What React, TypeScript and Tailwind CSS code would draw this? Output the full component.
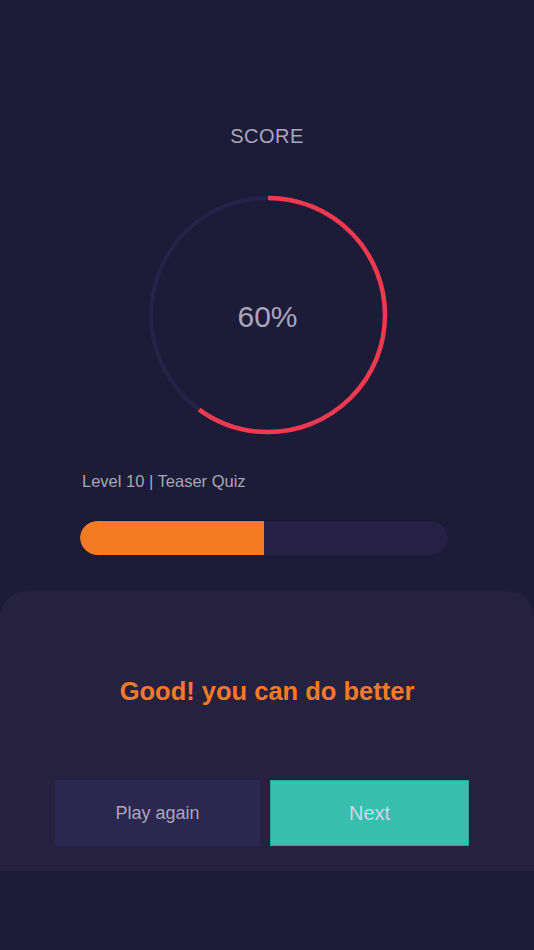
import React from 'react'

// score ring geometry
const R = 117
const C = 2 * Math.PI * R

function ScoreRing({ percent }: { percent: number }) {
  const dash = (percent / 100) * C
  return (
    <div className="relative w-[240px] h-[240px]">
      <svg width="240" height="240" viewBox="0 0 240 240" className="-rotate-90">
        <circle cx="120" cy="120" r={R} fill="none" stroke="#272249" strokeWidth="4" />
        <circle
          cx="120"
          cy="120"
          r={R}
          fill="none"
          stroke="#ef394e"
          strokeWidth="4.5"
          strokeDasharray={`${dash} ${C}`}
        />
      </svg>
      <div className="absolute inset-0 flex items-center justify-center">
        <p className="text-[30px] text-[#a9a6ba] pt-[3px]">{percent}%</p>
      </div>
    </div>
  )
}

export default function App() {
  return (
    <div className="w-[534px] h-[950px] bg-[#1d1c38] flex flex-col font-['Liberation_Sans',Arial,sans-serif]">
      <div className="flex flex-col items-center pt-[124px]">
        <p className="text-[20px] leading-6 text-[#a9a6ba] tracking-wide">SCORE</p>
        <div className="mt-[47px] ml-[1px]">
          <ScoreRing percent={60} />
        </div>
      </div>

      <div className="pl-[82px] pr-[86px] mt-[36px]">
        <p className="text-[16.5px] leading-5 text-[#a8a6b6]">Level 10 | Teaser Quiz</p>
        <div className="mt-[29px] ml-[-2px] h-[35px] rounded-full bg-[#262144] border-t border-[#17152c] overflow-hidden flex">
          <div className="w-1/2 h-full bg-[#f47a24] rounded-l-full" />
        </div>
      </div>

      <div className="mt-[36px] h-[280px] bg-[#25213f] rounded-t-[26px] flex flex-col items-center">
        <p className="mt-[86px] text-[25.5px] leading-7 font-bold text-[#f47a24]">Good! you can do better</p>
        <div className="mt-[75px] flex gap-[10px] self-start pl-[55px]">
          <button className="w-[205px] h-[66px] bg-[#2c2751] text-[18px] text-[#a9a6ba]">Play again</button>
          <button className="w-[199px] h-[66px] bg-[#37bfae] border border-[#2ca596] text-[20px] text-[#d6d1ec]">Next</button>
        </div>
      </div>

      <div className="flex-1 ml-[2px] bg-[#1d1c38]" />
    </div>
  )
}
